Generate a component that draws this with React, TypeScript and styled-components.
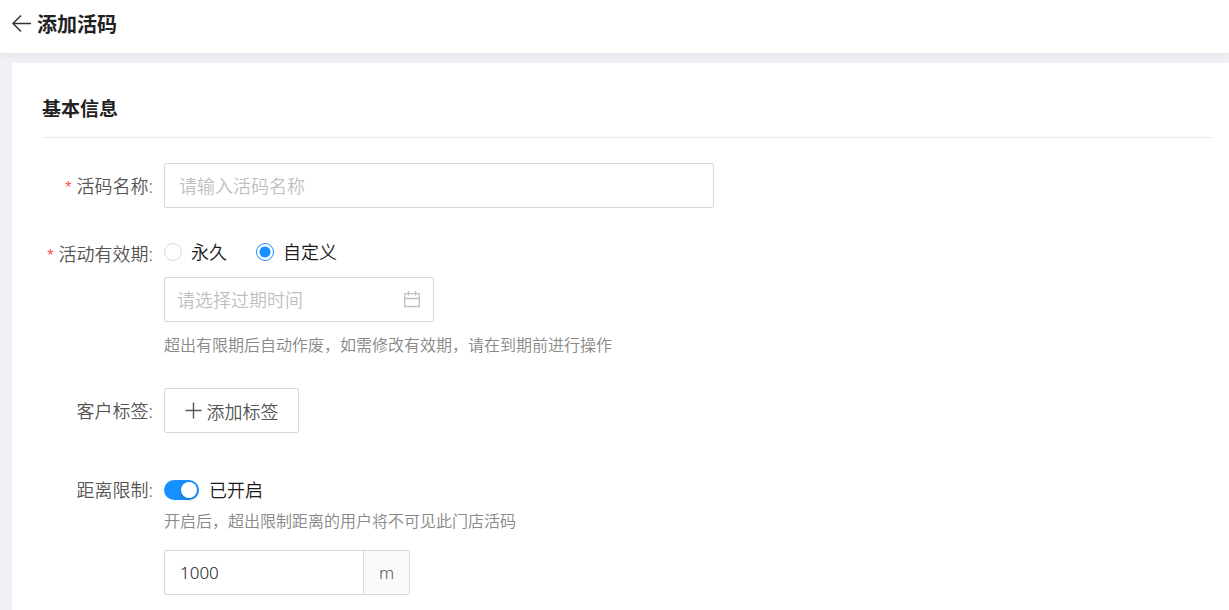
import React, { useState } from 'react';
import styled, { createGlobalStyle } from 'styled-components';

const GlobalStyle = createGlobalStyle`
  *, *::before, *::after { box-sizing: border-box; }
  body {
    margin: 0;
    background: #f0f1f5;
    color: #1a1a1a;
    font-family: 'Noto Sans', 'Noto Sans CJK SC', sans-serif;
    font-size: 18px;
    font-weight: 350;
  }
  input, button { font: inherit; color: inherit; margin: 0; }
  h1, h2, p { margin: 0; }
`;

const Page = styled.div`
  display: flex;
  flex-direction: column;
  min-height: 100vh;
`;

const Header = styled.header`
  display: flex;
  align-items: center;
  gap: 5px;
  height: 53px;
  padding: 0 12px 6px;
  background: #fff;
  box-shadow: 0 1px 8px rgba(0, 21, 41, 0.07);
`;

const BackButton = styled.button`
  display: flex;
  padding: 0;
  border: 0;
  background: none;
  cursor: pointer;
`;

const PageTitle = styled.h1`
  padding-top: 2px;
  color: #222;
  font-size: 20px;
  line-height: 28px;
  font-weight: 700;
`;

const Card = styled.main`
  flex: 1;
  margin: 10px 0 0 12px;
  padding: 32px 17px 15px 30px;
  background: #fff;
`;

const SectionTitle = styled.h2`
  padding-bottom: 14px;
  border-bottom: 1px solid #ebebeb;
  color: #222;
  font-size: 19px;
  line-height: 28px;
  font-weight: 700;
`;

const Form = styled.form`
  padding-top: 25px;
`;

const Row = styled.div<{ $gap?: number }>`
  display: grid;
  grid-template-columns: 111px minmax(0, 1fr);
  column-gap: 11px;
  margin-top: ${({ $gap = 0 }) => $gap}px;
`;

const Label = styled.label<{ $tall?: boolean; $required?: boolean }>`
  display: flex;
  align-items: center;
  justify-content: flex-end;
  height: ${({ $tall }) => ($tall ? 45 : 28)}px;
  padding-bottom: 2px;
  color: #555;
  white-space: nowrap;

  &::before {
    content: ${({ $required }) => ($required ? "'*'" : 'none')};
    margin: 6px 5px 0 0;
    color: #ff4d4f;
    font-family: 'Liberation Sans', sans-serif;
    font-size: 16px;
    font-weight: 400;
  }
`;

const TextInput = styled.input`
  display: block;
  width: 100%;
  max-width: 550px;
  height: 45px;
  padding: 0 14px;
  border: 1px solid #d9d9d9;
  border-radius: 2px;
  background: #fff;
  outline: none;

  &::placeholder { color: #bfbfbf; opacity: 1; }
`;

const RadioGroup = styled.div`
  display: flex;
  align-items: center;
  gap: 29px;
  height: 24px;
`;

const OptionLabel = styled.label`
  display: flex;
  align-items: center;
  gap: 9px;
`;

const OptionText = styled.span`
  line-height: 26px;
`;

const Radio = styled.input`
  appearance: none;
  width: 18px;
  height: 18px;
  border: 1px solid #d9d9d9;
  border-radius: 50%;
  background: #fff;

  &:checked {
    border-color: #1890ff;
    background: radial-gradient(circle, #1890ff 5px, #fff 6px);
  }
`;

const DateField = styled.div`
  display: flex;
  align-items: center;
  width: 270px;
  height: 45px;
  margin-top: 13px;
  padding: 0 13px 0 12px;
  border: 1px solid #d9d9d9;
  border-radius: 2px;
`;

const DateInput = styled.input`
  flex: 1;
  min-width: 0;
  padding: 0;
  border: 0;
  background: none;
  outline: none;

  &::placeholder { color: #bfbfbf; opacity: 1; }
`;

const Hint = styled.p<{ $gap: number }>`
  margin-top: ${({ $gap }) => $gap}px;
  color: #888;
  font-size: 16px;
  line-height: 26px;
`;

const TagButton = styled.button`
  display: flex;
  align-items: center;
  justify-content: center;
  gap: 5px;
  width: 135px;
  height: 45px;
  padding: 0;
  border: 1px solid #d9d9d9;
  border-radius: 2px;
  background: #fff;
  color: #555;
  cursor: pointer;
`;

const SwitchLine = styled(OptionLabel)`
  gap: 10px;
  height: 28px;
`;

const Switch = styled.input`
  display: flex;
  align-items: center;
  appearance: none;
  width: 35px;
  height: 20px;
  padding: 0 2px;
  border-radius: 10px;
  background: #bfbfbf;
  cursor: pointer;

  &::before {
    content: '';
    width: 16px;
    height: 16px;
    border-radius: 50%;
    background: #fff;
    box-shadow: 0 2px 4px rgba(0, 35, 11, 0.2);
  }

  &:checked { justify-content: flex-end; background: #1890ff; }
`;

const InputGroup = styled.div`
  display: flex;
  width: 246px;
  height: 45px;
  margin-top: 16px;
  border: 1px solid #d9d9d9;
  border-radius: 2px;
  font-size: 17px;
`;

const GroupInput = styled.input`
  flex: 1;
  min-width: 0;
  padding: 0 15px;
  border: 0;
  background: none;
  outline: none;
`;

const Unit = styled.span`
  display: flex;
  align-items: center;
  justify-content: center;
  width: 46px;
  border-left: 1px solid #d9d9d9;
  background: #fafafa;
  color: #555;
`;

const BackIcon = () => (
  <svg width="20" height="18" viewBox="0 0 20 18" fill="none" stroke="#333" strokeWidth="1.5" aria-hidden="true">
    <path d="M9 .5 1 8.5l8 8M1 8.5h18" />
  </svg>
);

const CalendarIcon = () => (
  <svg width="16" height="17" viewBox="0 0 16 17" fill="none" stroke="#bfbfbf" strokeWidth="1.3" aria-hidden="true">
    <path d="M.7 2.7h14.6v12.8H.7zM.7 7.5h14.6M4.5 0v4.5M11.5 0v4.5" />
  </svg>
);

const PlusIcon = () => (
  <svg width="17" height="17" viewBox="0 0 17 17" fill="none" stroke="#555" strokeWidth="1.4" aria-hidden="true">
    <path d="M8.5 .5v16M.5 8.5h16" />
  </svg>
);

export default function App() {
  const [period, setPeriod] = useState('custom');
  const [limited, setLimited] = useState(true);
  const [distance, setDistance] = useState('1000');

  return (
    <>
      <GlobalStyle />
      <Page>
        <Header>
          <BackButton type="button" aria-label="返回"><BackIcon /></BackButton>
          <PageTitle>添加活码</PageTitle>
        </Header>
        <Card>
          <SectionTitle>基本信息</SectionTitle>
          <Form>
            <Row>
              <Label htmlFor="code-name" $tall $required>活码名称:</Label>
              <TextInput id="code-name" placeholder="请输入活码名称" />
            </Row>
            <Row $gap={32}>
              <Label as="div" id="period-label" $required>活动有效期:</Label>
              <div>
                <RadioGroup role="radiogroup" aria-labelledby="period-label">
                  <OptionLabel>
                    <Radio type="radio" name="period" checked={period === 'forever'} onChange={() => setPeriod('forever')} />
                    <OptionText>永久</OptionText>
                  </OptionLabel>
                  <OptionLabel>
                    <Radio type="radio" name="period" checked={period === 'custom'} onChange={() => setPeriod('custom')} />
                    <OptionText>自定义</OptionText>
                  </OptionLabel>
                </RadioGroup>
                <DateField>
                  <DateInput aria-label="过期时间" placeholder="请选择过期时间" />
                  <CalendarIcon />
                </DateField>
                <Hint $gap={10}>超出有限期后自动作废，如需修改有效期，请在到期前进行操作</Hint>
              </div>
            </Row>
            <Row $gap={30}>
              <Label htmlFor="add-tag" $tall>客户标签:</Label>
              <TagButton id="add-tag" type="button"><PlusIcon />添加标签</TagButton>
            </Row>
            <Row $gap={43}>
              <Label htmlFor="distance-switch">距离限制:</Label>
              <div>
                <SwitchLine>
                  <Switch id="distance-switch" type="checkbox" role="switch" checked={limited} onChange={(e) => setLimited(e.target.checked)} />
                  <OptionText>{limited ? '已开启' : '已关闭'}</OptionText>
                </SwitchLine>
                <Hint $gap={4}>开启后，超出限制距离的用户将不可见此门店活码</Hint>
                <InputGroup>
                  <GroupInput aria-label="限制距离" value={distance} onChange={(e) => setDistance(e.target.value)} />
                  <Unit>m</Unit>
                </InputGroup>
              </div>
            </Row>
          </Form>
        </Card>
      </Page>
    </>
  );
}
